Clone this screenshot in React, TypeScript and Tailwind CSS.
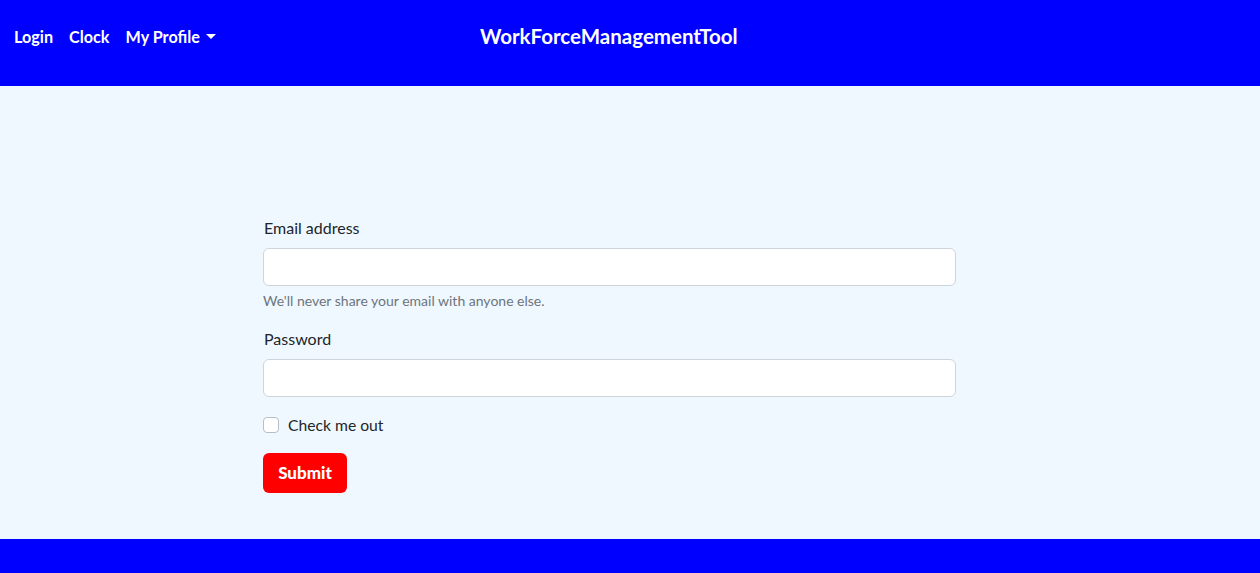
export default function App() {
  return (
    <div className="min-h-[573px] flex flex-col bg-[#f0f8ff] font-['Lato','Liberation_Sans',sans-serif] text-[#212529]">
      {/* Header */}
      <header className="h-[86px] bg-[#0000ff] flex items-start pt-[22px] text-white font-bold">
        <nav className="flex items-center pl-[14px] gap-[16px] text-[16.2px] leading-[29px]">
          <a href="#">Login</a>
          <a href="#">Clock</a>
          <a href="#" className="flex items-center">
            My Profile
            <span className="ml-[6px] w-0 h-0 border-t-[5px] border-t-white border-x-[5px] border-x-transparent" />
          </a>
        </nav>
        <h1 className="ml-[264px] text-[20.5px] leading-[29px]">WorkForceManagementTool</h1>
      </header>

      {/* Form */}
      <main className="flex-1 pt-[130px] pb-[46px]">
        <form className="ml-[263px] w-[693px]">
          <div className="mb-[16px]">
            <label className="block mb-[8px] text-[16px] leading-[24px] pl-px">Email address</label>
            <input
              type="email"
              className="block w-full h-[38px] bg-white border border-[#ced4da] rounded-[6px] px-3 outline-none"
            />
            <p className="mt-[4px] text-[14px] leading-[21px] text-[#6c757d]">We'll never share your email with anyone else.</p>
          </div>
          <div className="mb-[16px]">
            <label className="block mb-[8px] text-[16px] leading-[24px] pl-px">Password</label>
            <input
              type="password"
              className="block w-full h-[38px] bg-white border border-[#ced4da] rounded-[6px] px-3 outline-none"
            />
          </div>
          <div className="mb-[16px] flex items-center h-[24px]">
            <span className="w-[16px] h-[16px] bg-white border border-[#b8bec4] rounded-[4px]" />
            <label className="ml-[9px] text-[15.7px] leading-[24px]">Check me out</label>
          </div>
          <button
            type="button"
            className="h-[40px] w-[84px] bg-[#ff0000] rounded-[6px] text-white font-black text-[17px]"
          >
            Submit
          </button>
        </form>
      </main>

      {/* Footer */}
      <footer className="h-[34px] bg-[#0000ff]" />
    </div>
  );
}
